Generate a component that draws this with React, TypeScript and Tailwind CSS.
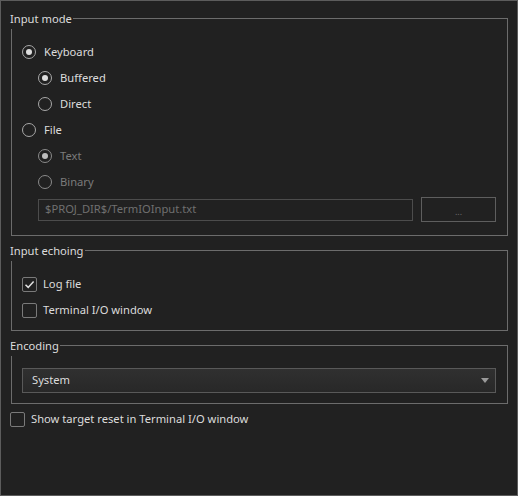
import { ReactNode } from "react";

function Radio({ label, checked, disabled }: { label: string; checked?: boolean; disabled?: boolean }) {
  return (
    <div className="flex h-[26px] items-center gap-[8px]">
      <span
        className={`flex h-[14px] w-[14px] items-center justify-center rounded-full border-[1.5px] ${
          disabled ? "border-[#8a8a8a]" : "border-[#a8a8a8]"
        }`}
      >
        {checked && <span className={`h-[6px] w-[6px] rounded-full ${disabled ? "bg-[#bdbdbd]" : "bg-[#dedede]"}`} />}
      </span>
      <span className={disabled ? "text-[#7b7b7b]" : "text-[#dcdcdc]"}>{label}</span>
    </div>
  );
}

function Check({ label, checked }: { label: string; checked?: boolean }) {
  return (
    <div className="flex h-[26px] items-center gap-[6px]">
      <span className="flex h-[15px] w-[15px] items-center justify-center rounded-[2px] border-[1.5px] border-[#7a7a7a]">
        {checked && (
          <svg width="11" height="11" viewBox="0 0 11 11">
            <path d="M1.5 5.8 L4.2 8.4 L9.6 2.4" fill="none" stroke="#e2e2e2" strokeWidth="1.5" />
          </svg>
        )}
      </span>
      <span className="text-[#dcdcdc]">{label}</span>
    </div>
  );
}

function Group({ title, className, children }: { title: string; className?: string; children: ReactNode }) {
  return (
    <div className={`relative ml-[10px] w-[497px] border border-[#6c6c6c] ${className ?? ""}`}>
      <span className="absolute left-[-2px] top-[-9px] bg-[#212121] pr-[1px] pb-[1px] leading-[18px] text-[#dcdcdc]">
        {title}
      </span>
      {children}
    </div>
  );
}

export default function App() {
  return (
    <div className="h-[496px] w-[518px] border border-[#5c5c5c] bg-[#212121] pt-[17px] font-['Noto_Sans','Open_Sans',sans-serif] text-[11.2px]">
      <Group title="Input mode" className="h-[218px] pt-[20px] pl-[10px]">
        <Radio label="Keyboard" checked />
        <div className="pl-[16px]">
          <Radio label="Buffered" checked />
          <Radio label="Direct" />
        </div>
        <Radio label="File" />
        <div className="pl-[16px]">
          <Radio label="Text" checked disabled />
          <Radio label="Binary" disabled />
          <div className="mt-[2px] flex items-center gap-[8px]">
            <div className="flex h-[22px] w-[375px] items-center border border-[#4c4c4c] px-[6px] text-[#707070]">
              $PROJ_DIR$/TermIOInput.txt
            </div>
            <div className="flex h-[25px] w-[75px] items-end justify-center border border-[#5e5e5e] pb-[5px] text-[9px] leading-none text-[#6a6a6a]">
              ...
            </div>
          </div>
        </div>
      </Group>

      <Group title="Input echoing" className="mt-[14px] h-[81px] pt-[20px] pl-[10px]">
        <Check label="Log file" checked />
        <Check label="Terminal I/O window" />
      </Group>

      <Group title="Encoding" className="mt-[14px] h-[59px] pt-[22px] pl-[10px]">
        <div className="flex h-[25px] w-[474px] items-center justify-between border border-[#595959] bg-gradient-to-b from-[#303030] to-[#282828] pl-[9px] pr-[6px] text-[#dcdcdc]">
          <span>System</span>
          <svg width="8" height="5" viewBox="0 0 8 5">
            <path d="M0 0 H8 L4 5 Z" fill="#9a9a9a" />
          </svg>
        </div>
      </Group>

      <div className="mt-[2px] ml-[9px]">
        <Check label="Show target reset in Terminal I/O window" />
      </div>
    </div>
  );
}
